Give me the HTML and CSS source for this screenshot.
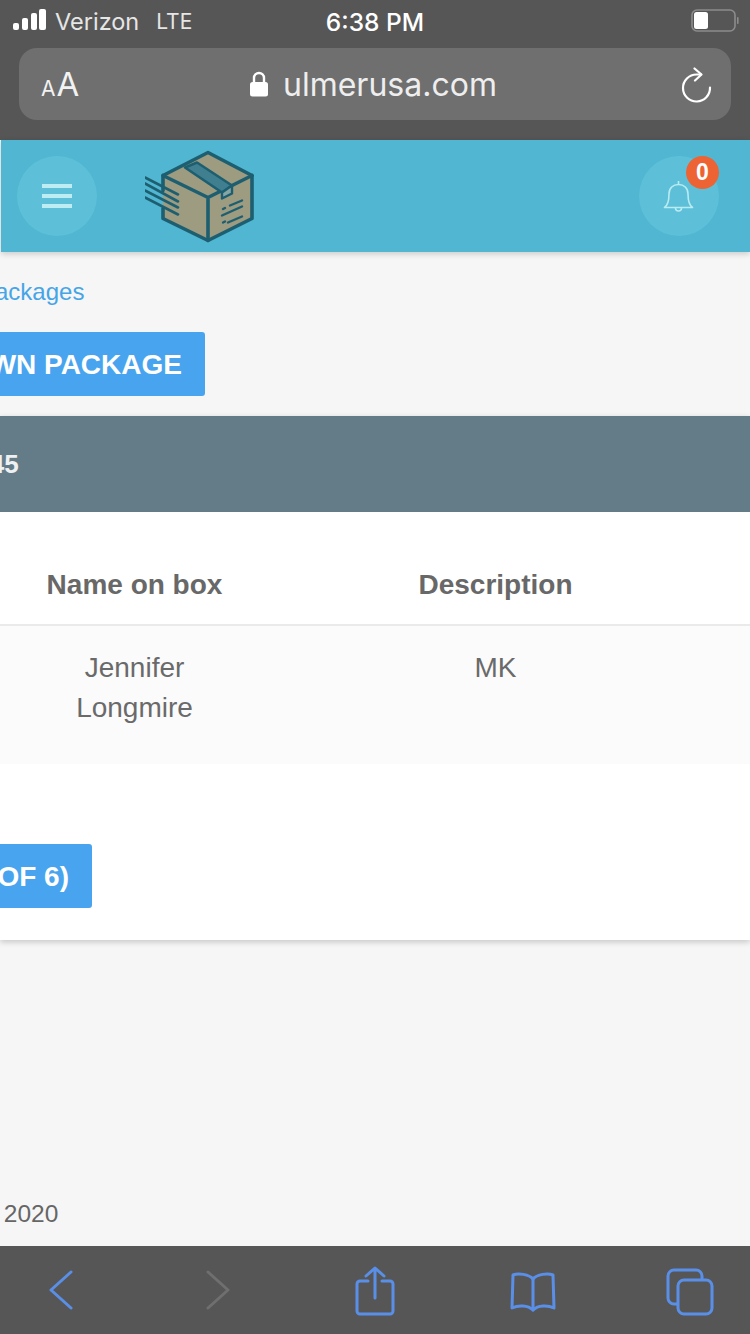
FILE: index.html
```html
<!DOCTYPE html>
<html lang="en">
<head>
<meta charset="utf-8">
<title>Packages</title>
<link rel="stylesheet" href="styles.css">
</head>
<body>
<div class="phone">
  <div class="chrome-top">
    <div class="status">
      <div class="status-left">
        <svg class="signal" viewBox="0 0 33 21"><rect x="0" y="14" width="6" height="7" rx="2"/><rect x="9" y="9" width="6" height="12" rx="2"/><rect x="18" y="4" width="6" height="17" rx="2"/><rect x="26" y="0" width="7" height="21" rx="2"/></svg>
        <span class="carrier">Verizon</span><span class="net">LTE</span>
      </div>
      <div class="time">6:38 PM</div>
      <svg class="battery" viewBox="0 0 48 24"><rect x="1" y="1" width="43" height="21" rx="5" fill="none" stroke="#8c8c8c" stroke-width="1.6"/><rect x="3" y="3" width="14" height="17" rx="2.5" fill="#fff"/><rect x="46" y="8" width="1.6" height="7" rx="0.8" fill="#8c8c8c"/></svg>
    </div>
    <div class="urlbar">
      <div class="aa"><span class="a-small">A</span><span class="a-big">A</span></div>
      <div class="url">
        <svg class="lock" viewBox="0 0 20 26"><path d="M5 12V7a5 5 0 0 1 10 0v5" fill="none" stroke="#fff" stroke-width="2.4"/><rect x="1" y="11" width="18" height="14.5" rx="2.5" fill="#fff"/></svg>
        <span>ulmerusa.com</span>
      </div>
      <svg class="reload" viewBox="0 0 34 38" fill="none" stroke="#fff" stroke-width="2.2" stroke-linecap="round" stroke-linejoin="round"><path d="M30 20.5A13.5 13.5 0 1 1 16.500 7.500L21 7.500"/><path d="M14.500 1.500L21.500 7.500L15 13.500"/></svg>
    </div>
  </div>

  <header class="topbar">
    <div class="round-btn">
      <div class="burger"><i></i><i></i><i></i></div>
    </div>
    <svg class="logo" viewBox="145 149.500 110 93" stroke="#1d5f70" stroke-width="3.600" stroke-linejoin="round" stroke-linecap="round">
      <path d="M163 175L208 152L252 175V218L208 240L163 218Z" fill="#9d9b80" stroke="none"/>
      <path d="M163 190V175L208 152L252 175V218L208 240L163 218V208" fill="none"/>
      <path d="M163 175L208 197L252 175M208 197V240" fill="none"/>
      <path d="M185 167L197 162L232 185L222 192Z" fill="#3f7f90" stroke-width="2.600"/>
      <path d="M222 192V198L232 193V185Z" fill="#86a5a5" stroke-width="2.400"/>
      <path d="M230 205L242 200M222 215L242 206M228 222L242 216M223 208.500L225 207.500M223 222L225 221" fill="none" stroke-width="2.400"/>
      <path d="M145 177L178 194M145 183L178 201M145 190L178 207M145 197L178 214" fill="none" stroke-width="2.600"/>
    </svg>
    <div class="round-btn bell-btn">
      <svg class="bell" viewBox="0 0 32 34" fill="none" stroke="#b9ebf2" stroke-width="1.600" stroke-linejoin="round"><path d="M1.500 28.500C5 26 6 22 6 15C6 9 10 5.500 15.500 5.500S25 9 25 15C25 22 26 26 29.500 28.500Z"/><path d="M15.500 5.500V2"/><path d="M12.500 29a3 3 0 0 0 6 0"/></svg>
      <span class="badge">0</span>
    </div>
  </header>

  <main class="content">
    <a class="crumb">Packages</a>
    <div class="btn-row"><a class="btn btn-wide">ADD YOUR OWN PACKAGE</a></div>
    <section class="card">
      <div class="card-head"><span>#12345</span></div>
      <div class="table">
        <div class="row head"><div class="c-name">Name on box</div><div class="c-desc">Description</div></div>
        <div class="row body"><div class="c-name">Jennifer Longmire</div><div class="c-desc">MK</div></div>
      </div>
      <div class="btn-row2"><a class="btn btn-small">SHIP (1 OF 6)</a></div>
    </section>
    <footer class="copy">© 2020</footer>
  </main>

  <nav class="chrome-bottom">
    <svg class="ic" viewBox="0 0 30 44" fill="none" stroke="#5a8fe8" stroke-width="3" stroke-linecap="round" stroke-linejoin="round"><path d="M25 4L5 22L25 40"/></svg>
    <svg class="ic" viewBox="0 0 30 44" fill="none" stroke="#6f6f6f" stroke-width="3" stroke-linecap="round" stroke-linejoin="round"><path d="M6 4L26 22L6 40"/></svg>
    <svg class="ic share" viewBox="0 0 40 50" fill="none" stroke="#5a8fe8" stroke-width="3" stroke-linecap="round" stroke-linejoin="round"><path d="M13 15H5a3 3 0 0 0-3 3V45a3 3 0 0 0 3 3H35a3 3 0 0 0 3-3V18a3 3 0 0 0-3-3H27"/><path d="M20 32V2M11 10L20 2L29 10"/></svg>
    <svg class="ic book" viewBox="0 0 46 40" fill="none" stroke="#5a8fe8" stroke-width="3" stroke-linecap="round" stroke-linejoin="round"><path d="M23 7C19 2 8 1 3 3L2 36C8 33 18 33 23 38C28 33 38 33 44 36L43 3C38 1 27 2 23 7Z"/><path d="M23 7V38"/></svg>
    <svg class="ic tabs" viewBox="0 0 48 48" fill="none" stroke="#5a8fe8" stroke-width="3" stroke-linejoin="round"><path d="M36 12V8a6 6 0 0 0-6-6H8a6 6 0 0 0-6 6V30a6 6 0 0 0 6 6H12"/><rect x="12" y="12" width="34" height="34" rx="6"/></svg>
  </nav>
</div>
</body>
</html>
```

FILE: styles.css
```css
* { box-sizing: border-box; }
html, body { margin: 0; padding: 0; }
body { width: 750px; height: 1334px; overflow: hidden; background: #f6f6f7; font-family: "Liberation Sans", Arial, sans-serif; }
.phone { width: 750px; height: 1334px; display: flex; flex-direction: column; overflow: hidden; }

.chrome-top { height: 140px; flex: none; background: #565656; color: #fff; padding: 0 12px 0 19px; }
.status { height: 42px; margin-left: -6px; display: flex; align-items: center; justify-content: space-between; position: relative; }
.status-left { display: flex; align-items: center; color: #e6e6e6; }
.signal { width: 33px; height: 21px; fill: #fff; margin-right: 9px; margin-top: -3px; }
.carrier { font: 400 23.5px "Inter", sans-serif; margin-right: 17px; }
.net { font: 400 21px "Inter", sans-serif; }
.time { position: absolute; left: 312px; top: 7px; width: 100px; text-align: center; font: 500 24.500px "Inter", sans-serif; white-space: nowrap; }
.battery { width: 48px; height: 24px; margin-right: -1px; }
.urlbar { width: 712px; height: 72px; margin-top: 6px; background: #6f6f6f; border-radius: 18px; display: flex; align-items: center; position: relative; padding: 0 18px 0 22px; }
.aa { width: 60px; color: #f2f2f2; font-family: "Inter", sans-serif; display: flex; align-items: baseline; }
.a-small { font-size: 21px; }
.a-big { font-size: 33px; margin-left: 1px; }
.url { position: absolute; left: 230px; top: 0; height: 72px; display: flex; align-items: center; color: #eee; font: 400 32px "Inter", sans-serif; white-space: nowrap; }
.lock { width: 20px; height: 26px; margin-right: 14px; }
.reload { position: absolute; right: 17px; top: 19px; width: 34px; height: 38px; }

.topbar { height: 112px; flex: none; margin-left: 1px; background: #50b6d2; display: flex; align-items: center; padding: 0 31px 0 16px; box-shadow: 0 2px 6px rgba(0,0,0,.18); position: relative; }
.round-btn { width: 80px; height: 80px; border-radius: 50%; background: #5dc0d8; display: flex; align-items: center; justify-content: center; position: relative; flex: none; }
.burger { width: 30px; display: flex; flex-direction: column; gap: 6px; }
.burger i { display: block; height: 4px; background: #bdecf3; }
.logo { width: 110px; height: 93px; margin-left: 48px; filter: blur(.6px); }
.bell-btn { margin-left: auto; }
.bell { width: 32px; height: 34px; }
.badge { position: absolute; left: 47px; top: 0; width: 33px; height: 33px; border-radius: 50%; background: #ee6333; color: #fff; font: 700 23px/33px "Liberation Sans", sans-serif; text-align: center; }

.content { flex: 1; min-height: 0; display: flex; flex-direction: column; position: relative; }
.crumb { display: block; margin-top: 25px; margin-left: -21px; font-size: 24px; line-height: 30px; color: #45a5e6; }
.btn { display: inline-block; background: #48a4ee; color: #fff; font-weight: 700; border-radius: 3px; white-space: nowrap; text-align: right; }
.btn-row { margin-top: 25px; height: 64px; display: flex; justify-content: flex-end; width: 205px; }
.btn-wide { flex: none; height: 64px; line-height: 65px; font-size: 28px; padding: 0 23px; }
.card { margin-top: 20px; height: 524px; background: #fff; box-shadow: 0 2px 6px rgba(0,0,0,.2); display: flex; flex-direction: column; }
.card-head { height: 96px; background: #647b88; color: #eef0f1; font-size: 26px; font-weight: 700; line-height: 97px; width: 100%; display: flex; overflow: hidden; }
.card-head span { margin-left: -68px; }
.table { display: flex; flex-direction: column; }
.row { display: grid; grid-template-columns: 269px 453px; text-align: center; }
.row.head { height: 114px; padding-top: 54px; font-size: 28px; line-height: 38px; font-weight: 700; border-bottom: 2px solid #eaeaea; color: #686868; }
.row.head .c-name { white-space: nowrap; padding: 0; }
.row.body { height: 138px; padding-top: 22px; font-size: 28px; line-height: 40px; background: #fbfbfb; color: #6a6a6a; }
.c-name { padding: 0 60px; }
.btn-row2 { margin-top: 80px; width: 92px; height: 64px; display: flex; justify-content: flex-end; }
.btn-small { flex: none; height: 64px; line-height: 65px; font-size: 28px; padding: 0 23px; }
.copy { margin-top: auto; margin-left: -21px; height: 48px; font-size: 24.500px; line-height: 32px; color: #666; }

.chrome-bottom { height: 88px; flex: none; background: #565656; display: flex; align-items: center; position: relative; }
.ic { position: absolute; top: 22px; width: 30px; height: 44px; }
.ic:nth-child(1) { left: 46px; }
.ic:nth-child(2) { left: 202px; }
.share { left: 355px !important; top: 20px; width: 40px; height: 50px; }
.book { left: 510px !important; top: 26px; width: 46px; height: 40px; }
.tabs { left: 666px !important; top: 22px; width: 48px; height: 48px; }
```
